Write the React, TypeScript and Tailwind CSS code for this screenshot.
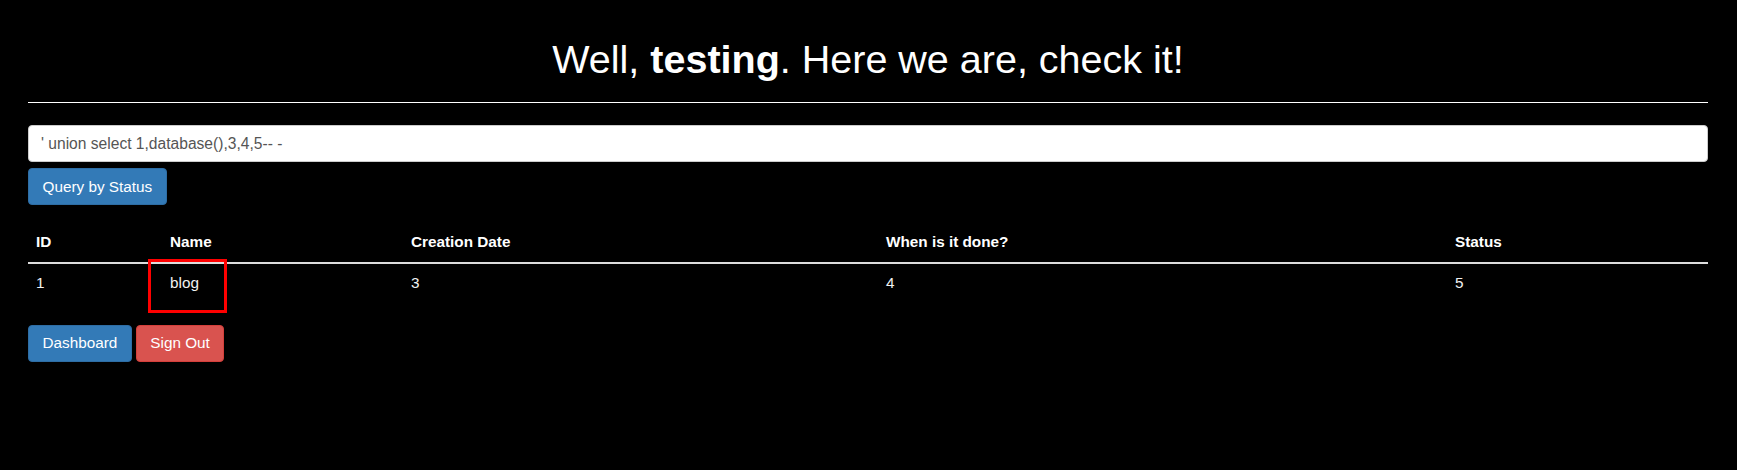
import React from "react";

export default function App() {
  const font = { fontFamily: '"Liberation Sans", Arial, Helvetica, sans-serif' };
  return (
    <div
      className="min-h-[470px] w-full bg-black pl-[28px] pr-[29px] text-white"
      style={font}
    >
      <h1 className="pt-[35px] text-center text-[39.5px] font-normal leading-[48px] text-white">
        Well, <b className="font-bold">testing</b>. Here we are, check it!
      </h1>
      <div className="mt-[19px] h-px w-full bg-white" />
      <form className="flex flex-col items-start" onSubmit={(e) => e.preventDefault()}>
        <input
          type="text"
          defaultValue="' union select 1,database(),3,4,5-- -"
          className="mt-[22px] h-[37px] w-full rounded-[4px] border border-[#cccccc] bg-white px-[12px] text-[15.6px] text-[#555555] outline-none"
          style={font}
        />
        <button
          type="submit"
          className="mt-[6px] h-[37px] rounded-[4px] border border-[#2e6da4] bg-[#337ab7] px-[13.5px] text-[15.3px] leading-[21px] text-white"
          style={font}
        >
          Query by Status
        </button>
      </form>
      <div className="relative mt-[17px]">
        <table className="w-full table-fixed border-collapse text-left text-[15.3px] leading-[24px]">
          <colgroup>
            <col className="w-[134px]" />
            <col className="w-[241px]" />
            <col className="w-[475px]" />
            <col className="w-[569px]" />
            <col />
          </colgroup>
          <thead>
            <tr className="border-b-2 border-[#dddddd]">
              <th className="px-[8px] py-[8px] font-bold text-white">ID</th>
              <th className="px-[8px] py-[8px] font-bold text-white">Name</th>
              <th className="px-[8px] py-[8px] font-bold text-white">Creation Date</th>
              <th className="px-[8px] py-[8px] font-bold text-white">When is it done?</th>
              <th className="px-[8px] py-[8px] font-bold text-white">Status</th>
            </tr>
          </thead>
          <tbody>
            <tr>
              <td className="px-[8px] pb-[8px] pt-[7px] text-[#f2f2f2]">1</td>
              <td className="px-[8px] pb-[8px] pt-[7px] text-[#f2f2f2]">blog</td>
              <td className="px-[8px] pb-[8px] pt-[7px] text-[#f2f2f2]">3</td>
              <td className="px-[8px] pb-[8px] pt-[7px] text-[#f2f2f2]">4</td>
              <td className="px-[8px] pb-[8px] pt-[7px] text-[#f2f2f2]">5</td>
            </tr>
          </tbody>
        </table>
        <div className="pointer-events-none absolute left-[120px] top-[37px] h-[54px] w-[79px] border-[3px] border-[#ff0000]" />
      </div>
      <div className="mt-[22px] flex gap-[4px]">
        <button
          type="button"
          className="h-[37px] rounded-[4px] border border-[#2e6da4] bg-[#337ab7] px-[13.5px] text-[15.3px] text-white"
          style={font}
        >
          Dashboard
        </button>
        <button
          type="button"
          className="h-[37px] rounded-[4px] border border-[#d43f3a] bg-[#d9534f] px-[13.5px] text-[15.3px] text-white"
          style={font}
        >
          Sign Out
        </button>
      </div>
    </div>
  );
}
